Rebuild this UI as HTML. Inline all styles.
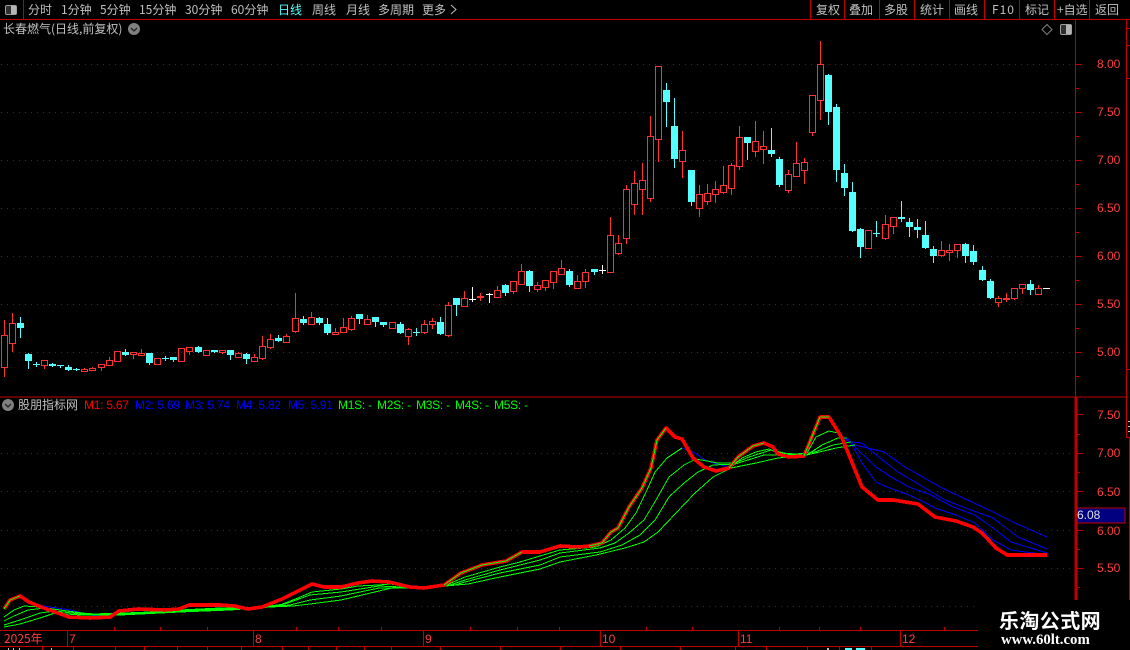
<!DOCTYPE html>
<html><head><meta charset="utf-8"><style>
html,body{margin:0;padding:0;background:#000}
#p{position:relative;width:1130px;height:650px;overflow:hidden;background:#000;font:12px/14px "WenQuanYi Zen Hei","Noto Sans CJK SC",sans-serif;color:#c0c0c0}
#p span{position:absolute;white-space:nowrap}
.a{font:12px/14px "Liberation Sans",sans-serif;color:#ff3c3c;left:1097px;letter-spacing:0}
.l{font:12px/14px "Liberation Sans",sans-serif;top:398px;letter-spacing:-.25px}
svg{position:absolute;left:0;top:0}
</style></head><body><div id="p">
<svg width="1130" height="650" viewBox="0 0 1130 650" fill="none" shape-rendering="crispEdges">
<!-- grid -->
<path d="M1 64.5H1075M1 112.5H1075M1 160.5H1075M1 208.5H1075M1 256.5H1075M1 304.5H1075M1 352.5H1075M1 453.5H1075M1 491.5H1075M1 530.5H1075M1 568.5H1075M1 606.5H1075" stroke="#a80000" stroke-dasharray="1 5"/>
<!-- frame -->
<path d="M0 19.5H1130M23.5 0V19M0 397H1126M1075.5 20V397M1126.5 20V437M1126 437.5H1130M810.5 0V19M844.5 0V19M879.5 0V19M914.5 0V19M949.5 0V19M984.5 0V19M1019.5 0V19M1054.5 0V19M1089.5 0V19M1076 64.5h6M1076 112.5h6M1076 160.5h6M1076 208.5h6M1076 256.5h6M1076 304.5h6M1076 352.5h6M1076 88.5h3M1076 136.5h3M1076 184.5h3M1076 232.5h3M1076 280.5h3M1076 328.5h3M1076 376.5h3M1127 28.5h3M1127 45.5h3M1127 78.5h3M1127 369.5h3" stroke="#c00000"/>
<path d="M1076 397V600" stroke="#c00000" stroke-width="3"/>
<path d="M1129.5 437V600M1077 414.5h6M1077 453.5h6M1077 491.5h6M1077 530.5h6M1077 568.5h6M1077 434.5h3M1077 472.5h3M1077 549.5h3M1077 587.5h3" stroke="#c00000"/>
<path d="M1128 421h2v1h-2zM1128 426h2v1h-2zM1128 431h2v1h-2z" fill="#c0c0c0"/>
<path d="M0 630.5H978M0 646.5H978M67.5 631V646M253.5 631V646M423.5 631V646M600.5 631V646M738.5 631V646M900.5 631V646M114.5 627V630M160.5 627V630M207.5 627V630M296.5 627V630M338.5 627V630M381.5 627V630M470.5 627V630M517.5 627V630M559.5 627V630M646.5 627V630M692.5 627V630M779.5 627V630M819.5 627V630M860.5 627V630M944.5 627V630M42.5 647V650M73.5 647V650M115.5 647V650M144.5 647V650M177.5 647V650M207.5 647V650M241.5 647V650M282.5 647V650M308.5 647V650M336.5 647V650M364.5 647V650M391.5 647V650M440.5 647V650M500.5 647V650M560.5 647V650M620.5 647V650M680.5 647V650M735.5 647V650M766.5 647V650M807.5 647V650M839.5 647V650M871.5 647V650" stroke="#c00000"/>
<path d="M8 648h1v2h-1zM13 648h1v2h-1zM19 648h1v2h-1zM51 648h1v2h-1zM827 648h2v2h-2z" fill="#c0c0c0"/>
<path d="M845 648h7v2h-7zM856 648h9v2h-9z" fill="#54ffff"/>
<!-- red candles -->
<path stroke="#ff3232" d="M4.5 320V335M4.5 367V377M1.5 335.5h6V367.5h-6zM12.5 313V323M12.5 343V352M9.5 323.5h6V343.5h-6zM44.5 365V369M41.5 360.5h6V365.5h-6zM84.5 368V369M81.5 369.5h6V371.5h-6zM92.5 367V368M89.5 368.5h6V370.5h-6zM101.5 367V371M98.5 364.5h6V367.5h-6zM109.5 357V360M106.5 360.5h6V365.5h-6zM117.5 361V362M114.5 351.5h6V361.5h-6zM133.5 354V359M130.5 352.5h6V354.5h-6zM141.5 349V353M138.5 353.5h6V355.5h-6zM157.5 364V365M154.5 358.5h6V364.5h-6zM178.5 348.5h6V361.5h-6zM189.5 351V355M186.5 347.5h6V351.5h-6zM203.5 350.5h6V355.5h-6zM222.5 352V354M219.5 350.5h6V352.5h-6zM238.5 352V353M235.5 353.5h6V357.5h-6zM254.5 354V357M251.5 357.5h6V361.5h-6zM262.5 336V346M262.5 358V360M259.5 346.5h6V358.5h-6zM270.5 334V339M270.5 347V349M267.5 339.5h6V347.5h-6zM286.5 334V336M283.5 336.5h6V342.5h-6zM295.5 293V318M295.5 331V333M292.5 318.5h6V331.5h-6zM311.5 312V317M308.5 317.5h6V324.5h-6zM335.5 328V332M332.5 332.5h6V334.5h-6zM343.5 318V327M340.5 327.5h6V332.5h-6zM351.5 316V318M351.5 329V331M348.5 318.5h6V329.5h-6zM367.5 315V319M364.5 319.5h6V324.5h-6zM389.5 322.5h6V328.5h-6zM408.5 328V329M408.5 336V345M405.5 329.5h6V336.5h-6zM424.5 320V324M424.5 332V334M421.5 324.5h6V332.5h-6zM432.5 318V321M432.5 324V329M429.5 321.5h6V324.5h-6zM448.5 302V305M448.5 335V337M445.5 305.5h6V335.5h-6zM464.5 291V298M461.5 298.5h6V306.5h-6zM480.5 293V296M480.5 297V301M477.5 296.5h6V297.5h-6zM497.5 286V290M494.5 290.5h6V297.5h-6zM513.5 291V294M510.5 281.5h6V291.5h-6zM521.5 264V271M518.5 271.5h6V284.5h-6zM537.5 282V285M537.5 289V292M534.5 285.5h6V289.5h-6zM545.5 287V291M542.5 280.5h6V287.5h-6zM553.5 282V289M550.5 271.5h6V282.5h-6zM561.5 260V268M558.5 268.5h6V274.5h-6zM577.5 275V281M577.5 288V289M574.5 281.5h6V288.5h-6zM585.5 269V272M585.5 281V288M582.5 272.5h6V281.5h-6zM610.5 217V235M610.5 272V273M607.5 235.5h6V272.5h-6zM618.5 235V243M618.5 253V255M615.5 243.5h6V253.5h-6zM626.5 185V189M626.5 238V244M623.5 189.5h6V238.5h-6zM634.5 171V183M634.5 204V215M631.5 183.5h6V204.5h-6zM642.5 163V180M642.5 189V215M639.5 180.5h6V189.5h-6zM650.5 116V136M650.5 198V202M647.5 136.5h6V198.5h-6zM658.5 139V162M655.5 66.5h6V139.5h-6zM682.5 131V150M682.5 161V178M679.5 150.5h6V161.5h-6zM699.5 185V194M699.5 208V217M696.5 194.5h6V208.5h-6zM707.5 184V193M707.5 201V205M704.5 193.5h6V201.5h-6zM715.5 181V189M715.5 194V203M712.5 189.5h6V194.5h-6zM723.5 166V185M723.5 192V194M720.5 185.5h6V192.5h-6zM731.5 163V165M731.5 188V195M728.5 165.5h6V188.5h-6zM739.5 126V137M739.5 166V170M736.5 137.5h6V166.5h-6zM755.5 121V141M755.5 151V157M752.5 141.5h6V151.5h-6zM763.5 131V146M763.5 149V164M760.5 146.5h6V149.5h-6zM788.5 170V174M788.5 190V193M785.5 174.5h6V190.5h-6zM796.5 142V163M793.5 163.5h6V176.5h-6zM804.5 158V162M804.5 170V184M801.5 162.5h6V170.5h-6zM812.5 132V136M809.5 95.5h6V132.5h-6zM820.5 41V64M820.5 100V120M817.5 64.5h6V100.5h-6zM865.5 230.5h6V248.5h-6zM885.5 215V224M885.5 238V240M882.5 224.5h6V238.5h-6zM893.5 226V234M890.5 217.5h6V226.5h-6zM941.5 241V250M941.5 255V257M938.5 250.5h6V255.5h-6zM949.5 244V250M949.5 252V261M946.5 250.5h6V252.5h-6zM957.5 250V258M954.5 244.5h6V250.5h-6zM998.5 296V298M998.5 302V307M995.5 298.5h6V302.5h-6zM1006.5 293V298M1006.5 299V302M1003.5 298.5h6V299.5h-6zM1014.5 298V300M1011.5 288.5h6V298.5h-6zM1022.5 288V294M1019.5 284.5h6V288.5h-6zM1038.5 285V288M1035.5 288.5h6V294.5h-6z"/>
<!-- cyan candles -->
<path fill="#54ffff" d="M20 317h1V338h-1zM17 323h7V328h-7zM28 353h1V369h-1zM25 354h7V361h-7zM36 362h1V367h-1zM33 364h7V365h-7zM52 363h1V367h-1zM49 364h7V366h-7zM60 365h1V368h-1zM57 365h7V366h-7zM68 365h1V371h-1zM65 367h7V370h-7zM76 368h1V371h-1zM73 369h7V370h-7zM125 349h1V356h-1zM122 352h7V355h-7zM149 353h1V365h-1zM146 353h7V363h-7zM165 356h1V361h-1zM162 358h7V359h-7zM173 357h1V362h-1zM170 357h7V360h-7zM198 346h1V353h-1zM195 347h7V352h-7zM214 350h1V353h-1zM211 350h7V352h-7zM230 350h1V360h-1zM227 350h7V355h-7zM246 353h1V364h-1zM243 354h7V359h-7zM278 335h1V342h-1zM275 338h7V341h-7zM303 316h1V325h-1zM300 319h7V323h-7zM319 317h1V325h-1zM316 318h7V323h-7zM327 318h1V335h-1zM324 324h7V333h-7zM359 314h1V324h-1zM356 314h7V319h-7zM375 317h1V327h-1zM372 317h7V322h-7zM383 322h1V327h-1zM380 322h7V325h-7zM400 322h1V334h-1zM397 324h7V333h-7zM416 328h1V336h-1zM413 332h7V333h-7zM440 317h1V335h-1zM437 322h7V334h-7zM456 298h1V316h-1zM453 298h7V305h-7zM505 284h1V296h-1zM502 285h7V293h-7zM529 270h1V292h-1zM526 271h7V286h-7zM569 269h1V287h-1zM566 271h7V285h-7zM594 269h1V275h-1zM591 269h7V272h-7zM666 83h1V127h-1zM663 90h7V102h-7zM674 98h1V168h-1zM671 126h7V159h-7zM691 170h1V206h-1zM688 170h7V202h-7zM747 137h1V160h-1zM744 137h7V143h-7zM771 128h1V157h-1zM768 150h7V154h-7zM779 157h1V187h-1zM776 159h7V185h-7zM828 74h1V125h-1zM825 75h7V112h-7zM836 104h1V182h-1zM833 107h7V170h-7zM844 164h1V196h-1zM841 173h7V188h-7zM852 182h1V232h-1zM849 192h7V231h-7zM860 228h1V258h-1zM857 229h7V247h-7zM876 221h1V237h-1zM873 233h7V234h-7zM901 201h1V222h-1zM898 217h7V219h-7zM909 218h1V237h-1zM906 222h7V227h-7zM917 219h1V238h-1zM914 227h7V230h-7zM925 221h1V249h-1zM922 235h7V248h-7zM933 246h1V263h-1zM930 249h7V256h-7zM965 243h1V263h-1zM962 244h7V256h-7zM973 245h1V265h-1zM970 251h7V262h-7zM982 266h1V281h-1zM979 270h7V280h-7zM990 279h1V299h-1zM987 281h7V298h-7zM1030 280h1V295h-1zM1027 284h7V290h-7z"/>
<!-- white candles -->
<path fill="#fff" d="M472 287h1V302h-1zM469 299h7v1h-7zM489 293h1V303h-1zM486 294h7v1h-7zM602 265h1V274h-1zM599 270h7v1h-7zM1043 288h7v1h-7z"/>
<!-- lower lines -->
<g stroke-linejoin="round">
<polyline stroke="#0000ff" points="30,604 50,607 70,610 90,615 105,617"/>
<polyline stroke="#00ff00" points="4,617 14,610 24,606 40,607 60,610 80,613 110,615 125,613 150,612 180,610 220,608 262,607 280,605 298,598 312,592 341,589 358,586 379,585 390,584 424,588 444,586 465,577 500,567 520,562 540,556 560,550 596,547 611,540 625,528 636,513 647,490 655,472 667,458 682,448"/>
<polyline stroke="#0000ff" points="682,448 695,453 705,460 720,465 731,467"/>
<polyline stroke="#00ff00" points="731,467 742,458 756,452 769,449 778,453 796,454 807,453 816,437 829,431 838,433"/>
<polyline stroke="#0000ff" points="838,433 851,443 862,463 876,482 887,487 909,495 924,502 935,508 956,515 975,523 993,540 1011,550 1033,553 1047,554"/>
<polyline stroke="#00ff00" points="4,621 14,616 28,610 45,608 60,610 90,614 130,613 180,611 230,608 262,607 285,604 310,595 341,592 379,586 424,588 450,585 465,580 500,570 540,560 560,553 600,548 615,543 629,533 644,520 656,500 669,477 684,465 696,459 718,463 735,463 749,457 771,450 793,455 807,455 822,445 838,438 847,438"/>
<polyline stroke="#0000ff" points="847,438 858,450 876,467 891,477 909,487 931,495 953,507 975,515 993,528 1011,542 1047,553"/>
<polyline stroke="#00ff00" points="4,625 20,620 40,613 55,611 80,614 120,614 180,612 230,609 265,607 290,605 310,600 341,596 379,588 424,588 455,585 465,582 500,573 540,565 560,557 600,552 622,545 640,535 655,520 669,497 684,483 698,472 713,465 735,464 764,455 793,455 815,452 833,445 851,442"/>
<polyline stroke="#0000ff" points="851,442 862,443 880,458 898,472 920,485 945,500 971,510 993,518 1018,537 1047,549"/>
<polyline stroke="#00ff00" points="4,627 20,624 40,618 55,613 80,615 120,615 180,612 230,610 270,607 293,606 310,604 341,600 379,591 396,587 424,588 468,584 500,577 540,569 560,562 596,555 625,548 644,542 658,532 676,513 695,493 713,477 731,468 756,463 778,458 807,455 836,448 855,445"/>
<polyline stroke="#0000ff" points="855,445 884,452 905,467 942,488 989,510 1015,523 1047,537"/>
<polyline stroke="#ff0000" stroke-width="3.6" points="4,609 10,600 20,596 29,602 41,607 55,612 69,617 90,618 110,617 119,611 138,609 165,610 179,609 189,605 220,605 234,606 248,609 262,607 282,599 296,592 312,584 324,587 341,587 358,583 372,581 389,582 410,587 424,588 444,585 461,573 482,565 506,561 522,552 540,552 560,546 578,547 589,546 602,543 611,532 618,528 629,507 642,488 651,468 657,440 666,428 675,437 682,439 693,458 704,467 716,471 729,468 738,457 753,446 764,443 773,447 778,454 789,457 804,456 820,417 829,417 842,438 851,460 862,487 878,500 893,500 918,504 935,517 956,521 973,527 982,533 996,548 1007,555 1047,555"/>
<path stroke="#00ff00" d="M4 609L10 600L20 596M444 585L461 573L482 565L506 561L522 552M589 546L602 543L611 532L618 528L629 507L642 488L651 468L657 440L666 428M729 468L738 457L753 446L764 443M804 456L820 417L829 417"/>
</g>
<!-- 6.08 box -->
<rect x="1077" y="508" width="48" height="15" fill="#000080" stroke="#c00000"/>
<!-- icons -->
<g shape-rendering="auto">
<rect x="5.5" y="5.5" width="11" height="9" rx="1.5" stroke="#a0a0a0" fill="#303030"/><rect x="11" y="6" width="5" height="8" fill="#b4b4b4"/>
<rect x="1060.5" y="24.5" width="11" height="10" rx="1.5" stroke="#a0a0a0" fill="#303030"/><rect x="1066" y="25" width="5" height="9" fill="#b4b4b4"/>
<path d="M1047 24.5L1052 29.5L1047 34.5L1042 29.5Z" stroke="#808080"/>
<circle cx="134" cy="29" r="6" fill="#808080"/><path d="M131 28l3 3 3-3" stroke="#222" stroke-width="1.3"/>
<circle cx="8" cy="405" r="6" fill="#808080"/><path d="M5 404l3 3 3-3" stroke="#222" stroke-width="1.3"/>
<path d="M451 5l5 4.5-5 4.5" stroke="#c0c0c0"/>
</g>
<!-- watermark -->
<rect x="978" y="601" width="152" height="49" fill="#000"/>
</svg>

<span style="left:28px;top:3px">分时</span><span style="left:61px;top:3px">1分钟</span><span style="left:100px;top:3px">5分钟</span><span style="left:139px;top:3px">15分钟</span><span style="left:185px;top:3px">30分钟</span><span style="left:231px;top:3px">60分钟</span><span style="left:278px;top:3px;color:#54ffff">日线</span><span style="left:312px;top:3px">周线</span><span style="left:346px;top:3px">月线</span><span style="left:378px;top:3px">多周期</span><span style="left:422px;top:3px">更多</span>
<span style="left:816px;top:3px">复权</span><span style="left:849px;top:3px">叠加</span><span style="left:884px;top:3px">多股</span><span style="left:920px;top:3px">统计</span><span style="left:954px;top:3px">画线</span><span style="left:992px;top:3px;letter-spacing:1px">F10</span><span style="left:1025px;top:3px">标记</span><span style="left:1057px;top:3px">+自选</span><span style="left:1095px;top:3px">返回</span>
<span style="left:3px;top:22px">长春燃气(日线,前复权)</span>
<span class="a" style="top:57px">8.00</span><span class="a" style="top:105px">7.50</span><span class="a" style="top:153px">7.00</span><span class="a" style="top:201px">6.50</span><span class="a" style="top:249px">6.00</span><span class="a" style="top:297px">5.50</span><span class="a" style="top:345px">5.00</span>
<span class="a" style="top:408px">7.50</span><span class="a" style="top:446px">7.00</span><span class="a" style="top:485px">6.50</span><span class="a" style="top:524px">6.00</span><span class="a" style="top:561px">5.50</span>
<span class="a" style="left:1077px;top:508px;color:#e0e0e0">6.08</span>
<span style="left:18px;top:398px">股朋指标网</span>
<span class="l" style="left:84px;color:#f00">M1: 5.67</span><span class="l" style="left:135px;color:#0000ff">M2: 5.69</span><span class="l" style="left:185px;color:#0000ff">M3: 5.74</span><span class="l" style="left:236px;color:#0000ff">M4: 5.82</span><span class="l" style="left:288px;color:#0000ff">M5: 5.91</span>
<span class="l" style="left:338px;color:#0f0">M1S: -</span><span class="l" style="left:377px;color:#0f0">M2S: -</span><span class="l" style="left:416px;color:#0f0">M3S: -</span><span class="l" style="left:455px;color:#0f0">M4S: -</span><span class="l" style="left:494px;color:#0f0">M5S: -</span>
<span style="left:4px;top:632px;color:#ff3c3c">2025年</span>
<span class="a" style="left:69px;top:632px">7</span><span class="a" style="left:255px;top:632px">8</span><span class="a" style="left:425px;top:632px">9</span><span class="a" style="left:602px;top:632px">10</span><span class="a" style="left:740px;top:632px">11</span><span class="a" style="left:902px;top:632px">12</span>
<span style="left:999px;top:608px;font:bold 20px/24px 'Noto Sans CJK SC',sans-serif;color:#fff;letter-spacing:.4px">乐淘公式网</span>
<span style="left:1001px;top:632px;font:bold 14.8px/17px 'Liberation Serif',serif;color:#fff">www.60lt.com</span>
</div></body></html>
